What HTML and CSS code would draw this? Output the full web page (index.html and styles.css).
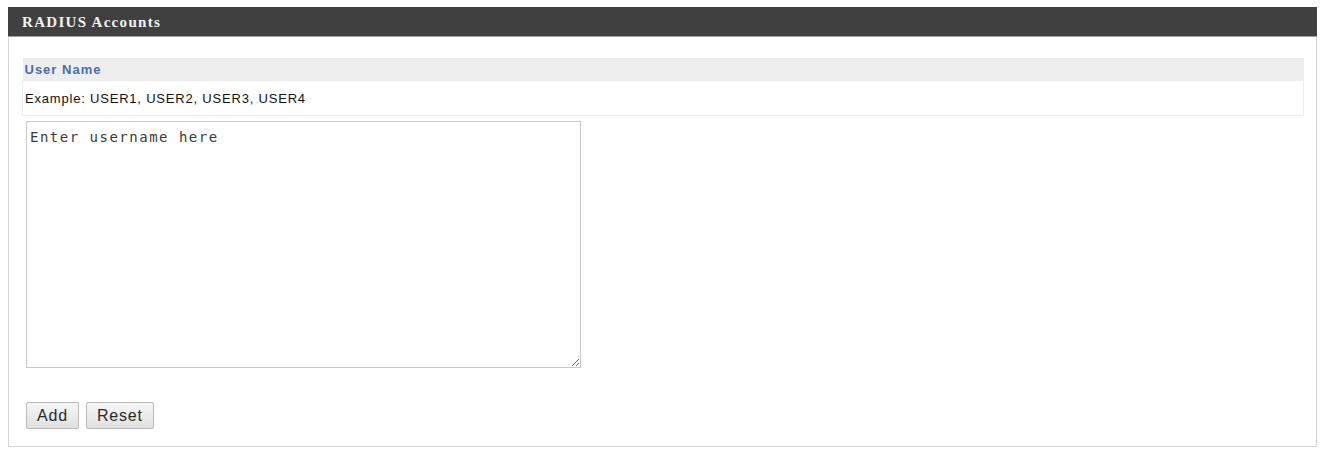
FILE: index.html
```html
<!DOCTYPE html>
<html lang="en">
<head>
    <meta charset="UTF-8">
    <title>RADIUS Accounts</title>
    <link rel="stylesheet" href="styles.css">
</head>
<body>
    <div class="panel">
        <div class="panel-title">RADIUS Accounts</div>
        <div class="panel-body">
            <table class="info">
                <tr><td class="head">User Name</td></tr>
                <tr><td class="desc">Example: USER1, USER2, USER3, USER4</td></tr>
            </table>
            <textarea class="names" placeholder="Enter username here"></textarea>
            <div class="actions">
                <button type="button">Add</button>
                <button type="reset">Reset</button>
            </div>
        </div>
    </div>
</body>
</html>
```
FILE: styles.css
```css
body { margin: 7px 6px 4px 8px; font-family: "Liberation Sans", Arial, sans-serif; font-size: 14px; color: #222; background: #fff; }
.panel { border: 1px solid #d4d4d4; border-top: none; height: 440px; box-sizing: border-box; }
.panel-title { background: #404040; color: #f2f2f2; font-family: "Liberation Serif", "Times New Roman", serif; font-weight: bold; font-size: 15px; letter-spacing: 1.3px; height: 30px; line-height: 30px; margin: 0 -1px; padding-left: 14px; border-bottom: 1px solid #a0a0a0; box-sizing: border-box; }
.panel-body { padding: 21px 12px 0 13px; }
.info { width: 100%; border-collapse: collapse; }
.info td { padding: 0 2px; }
.head { background: #eeeeee; color: #4a6da8; font-weight: bold; font-size: 13px; letter-spacing: 1px; height: 22px; }
.desc { border: 1px solid #ececec; height: 34px; color: #111; font-size: 13px; letter-spacing: 0.8px; }
.names { display: block; width: 555px; height: 247px; margin: 5px 0 0 4px; box-sizing: border-box; border: 1px solid #c8c8c8; padding: 7px 3px; font-family: "DejaVu Sans Mono", monospace; font-size: 14px; letter-spacing: 1.5px; resize: both; }
.names::placeholder { color: #3a3a3a; }
.actions { display: flex; gap: 7px; margin: 34px 0 0 4px; }
.actions button { font-family: "Liberation Sans", Arial, sans-serif; font-size: 16px; letter-spacing: 0.8px; color: #2a2a2a; background: linear-gradient(#f6f6f6, #e0e0e0); border: 1px solid #b9b9b9; border-radius: 2px; height: 27px; padding: 0 10px; }
```
